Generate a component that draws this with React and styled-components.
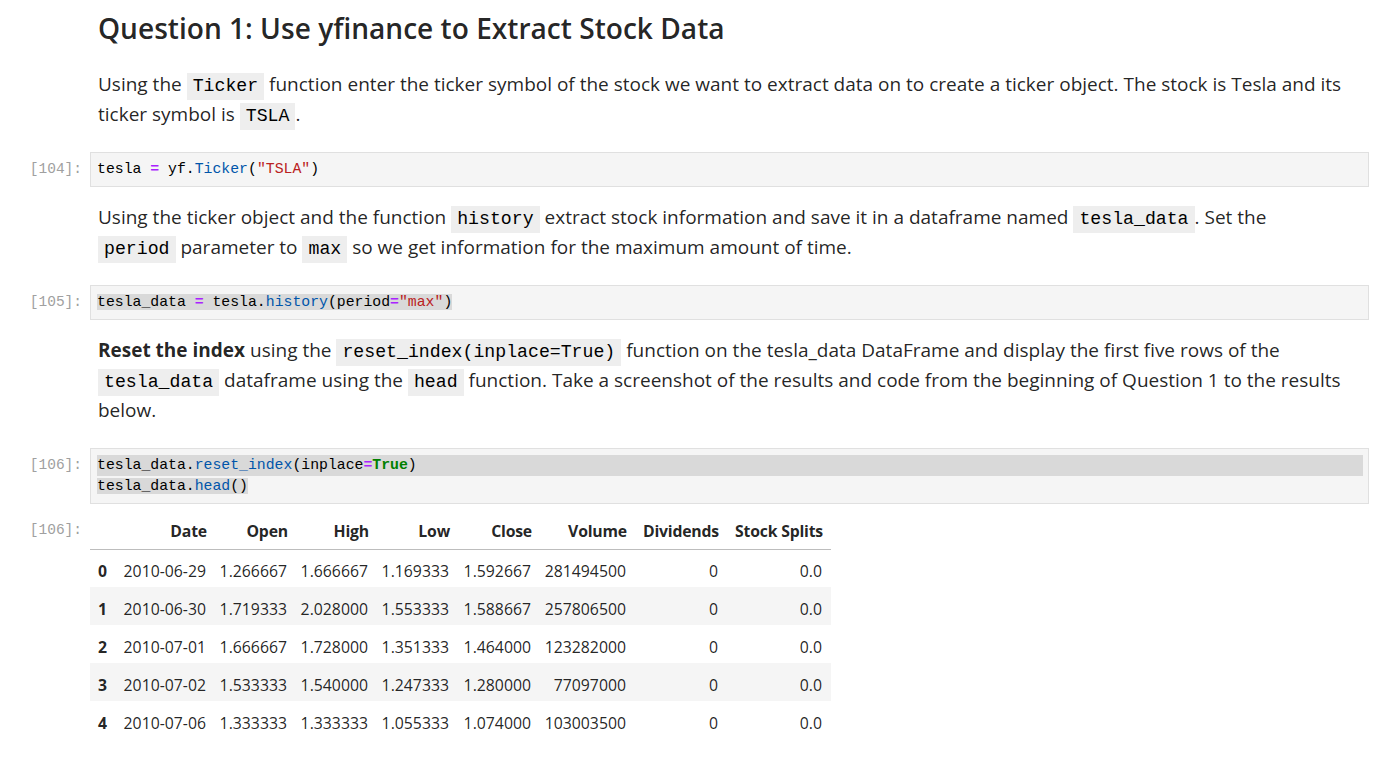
import React from "react";
import styled, { createGlobalStyle } from "styled-components";

const Global = createGlobalStyle`
  html, body { margin: 0; padding: 0; background: #ffffff; }
  body { font-family: "Open Sans", "Noto Sans", sans-serif; color: rgba(0,0,0,0.87); }
`;

const Notebook = styled.div`
  width: 1369px;
  padding-top: 11px;
  padding-bottom: 20px;
  display: flex;
  flex-direction: column;
`;

const Row = styled.div`
  display: grid;
  grid-template-columns: 90px 1fr;
  margin-top: ${(p) => p.$mt || 0}px;
`;

const Prompt = styled.div`
  font-family: "Liberation Mono", "DejaVu Sans Mono", monospace;
  font-size: 14.5px;
  line-height: 21px;
  color: #a0a0a0;
  text-align: right;
  padding-right: 8px;
  padding-top: ${(p) => p.$pt || 7}px;
`;

const Markdown = styled.div`
  padding-left: 8px;
`;

const Heading = styled.h2`
  margin: 0;
  font-size: 28.1px;
  font-weight: 600;
  line-height: 34px;
  color: rgba(0,0,0,0.87);
`;

const Para = styled.p`
  margin: 0;
  font-size: 19px;
  line-height: 30px;
  color: rgba(0,0,0,0.87);
`;

const Strong = styled.b`
  font-weight: 700;
`;

const Code = styled.code`
  font-family: "Liberation Mono", "DejaVu Sans Mono", monospace;
  font-size: 18.2px;
  line-height: 1;
  background: #eeeeee;
  padding: 3px 6px 4px;
  color: #000;
`;

const CodeBox = styled.div`
  border: 1px solid #e0e0e0;
  background: #f5f5f5;
  padding: 6px 5px 6px 6px;
  font-family: "Liberation Mono", "DejaVu Sans Mono", monospace;
  font-size: 14.8px;
  line-height: 21px;
  color: #000;
`;

const Line = styled.div`
  white-space: pre;
  background: ${(p) => (p.$full ? "#d9d9d9" : "transparent")};
`;

const Sel = styled.span`
  background: #d9d9d9;
`;

const Op = styled.span`
  color: #aa22ff;
  font-weight: 700;
`;
const Prop = styled.span`
  color: #0055aa;
`;
const Str = styled.span`
  color: #ba2121;
`;
const Kw = styled.span`
  color: #008000;
  font-weight: 700;
`;

const Output = styled.div`
  padding-top: 9px;
`;

const Table = styled.table`
  border-collapse: collapse;
  table-layout: fixed;
  width: 741px;
  font-family: "Open Sans", "Noto Sans", sans-serif;
  font-size: 15.8px;
  color: rgba(0,0,0,0.87);
`;

const HeadRow = styled.tr`
  height: 36px;
  border-bottom: 1px solid #bdbdbd;
`;

const BodyRow = styled.tr`
  height: 38px;
  background: ${(p) => (p.$alt ? "#f5f5f5" : "transparent")};
`;

const Th = styled.th`
  font-weight: 700;
  text-align: right;
  padding: 0 8px 0 2px;
  white-space: nowrap;
  letter-spacing: -0.2px;
`;

const IndexTh = styled.th`
  font-weight: 700;
  text-align: left;
  padding: ${(p) => (p.$body ? "5px 0 0 8px" : "0 0 0 8px")};
`;

const Td = styled.td`
  text-align: right;
  padding: 5px 9px 0 2px;
  white-space: nowrap;
`;

const colWidths = [26, 99, 81, 81, 81, 82, 95, 92, 104];
const headers = ["Date", "Open", "High", "Low", "Close", "Volume", "Dividends", "Stock Splits"];
const rows = [
  ["2010-06-29", "1.266667", "1.666667", "1.169333", "1.592667", "281494500", "0", "0.0"],
  ["2010-06-30", "1.719333", "2.028000", "1.553333", "1.588667", "257806500", "0", "0.0"],
  ["2010-07-01", "1.666667", "1.728000", "1.351333", "1.464000", "123282000", "0", "0.0"],
  ["2010-07-02", "1.533333", "1.540000", "1.247333", "1.280000", "77097000", "0", "0.0"],
  ["2010-07-06", "1.333333", "1.333333", "1.055333", "1.074000", "103003500", "0", "0.0"],
];

export default function App() {
  return (
    <>
      <Global />
      <Notebook>
        <Row>
          <div />
          <Markdown>
            <Heading>Question 1: Use yfinance to Extract Stock Data</Heading>
          </Markdown>
        </Row>
        <Row $mt={24}>
          <div />
          <Markdown>
            <Para>
              Using the <Code>Ticker</Code> function enter the ticker symbol of the stock we want to extract data on to create a ticker object. The stock is Tesla and its
              <br />
              ticker symbol is <Code>TSLA</Code>.
            </Para>
          </Markdown>
        </Row>
        <Row $mt={23}>
          <Prompt>[104]:</Prompt>
          <CodeBox>
            <Line>
              tesla <Op>=</Op> yf.<Prop>Ticker</Prop>(<Str>"TSLA"</Str>)
            </Line>
          </CodeBox>
        </Row>
        <Row $mt={15}>
          <div />
          <Markdown>
            <Para>
              Using the ticker object and the function <Code>history</Code> extract stock information and save it in a dataframe named <Code>tesla_data</Code>. Set the
              <br />
              <Code>period</Code> parameter to <Code>max</Code> so we get information for the maximum amount of time.
            </Para>
          </Markdown>
        </Row>
        <Row $mt={23}>
          <Prompt>[105]:</Prompt>
          <CodeBox>
            <Line>
              <Sel>
                tesla_data <Op>=</Op> tesla.<Prop>history</Prop>(period<Op>=</Op><Str>"max"</Str>)
              </Sel>
            </Line>
          </CodeBox>
        </Row>
        <Row $mt={15}>
          <div />
          <Markdown>
            <Para>
              <Strong>Reset the index</Strong> using the <Code>reset_index(inplace=True)</Code> function on the tesla_data DataFrame and display the first five rows of the
              <br />
              <Code>tesla_data</Code> dataframe using the <Code>head</Code> function. Take a screenshot of the results and code from the beginning of Question 1 to the results
              <br />
              below.
            </Para>
          </Markdown>
        </Row>
        <Row $mt={23}>
          <Prompt>[106]:</Prompt>
          <CodeBox>
            <Line $full>
              tesla_data.<Prop>reset_index</Prop>(inplace<Op>=</Op><Kw>True</Kw>)
            </Line>
            <Line>
              <Sel>
                tesla_data.<Prop>head</Prop>()
              </Sel>
            </Line>
          </CodeBox>
        </Row>
        <Row>
          <Prompt $pt={16}>[106]:</Prompt>
          <Output>
            <Table>
              <colgroup>
                {colWidths.map((w, i) => (
                  <col key={i} style={{ width: w }} />
                ))}
              </colgroup>
              <thead>
                <HeadRow>
                  <IndexTh />
                  {headers.map((h) => (
                    <Th key={h}>{h}</Th>
                  ))}
                </HeadRow>
              </thead>
              <tbody>
                {rows.map((r, i) => (
                  <BodyRow key={i} $alt={i % 2 === 1}>
                    <IndexTh $body>{i}</IndexTh>
                    {r.map((c, j) => (
                      <Td key={j}>{c}</Td>
                    ))}
                  </BodyRow>
                ))}
              </tbody>
            </Table>
          </Output>
        </Row>
      </Notebook>
    </>
  );
}
